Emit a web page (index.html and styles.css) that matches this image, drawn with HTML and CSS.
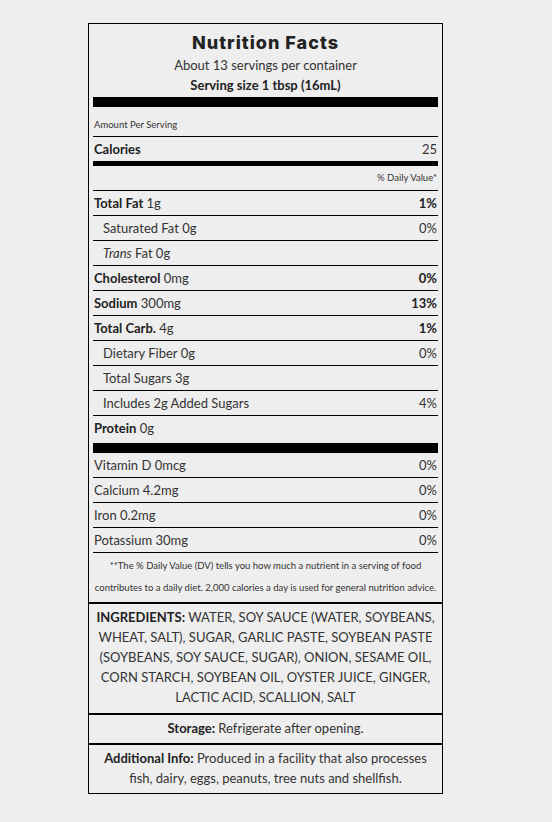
FILE: index.html
```html
<!DOCTYPE html>
<html>
<head>
<meta charset="utf-8">
<link rel="stylesheet" href="styles.css">
</head>
<body>
<div class="panel">
  <div class="label">
    <h1 class="title">Nutrition Facts</h1>
    <p class="servings">About 13 servings per container</p>
    <p class="size">Serving size 1 tbsp (16mL)</p>
    <div class="bar-thick"></div>
    <div class="amount">Amount Per Serving</div>
    <div class="row calories"><span class="b">Calories</span><span>25</span></div>
    <div class="bar-mid"></div>
    <div class="dv">% Daily Value*</div>
    <div class="row"><span><b>Total Fat</b> 1g</span><b>1%</b></div>
    <div class="row sub"><span>Saturated Fat 0g</span><span class="pct">0%</span></div>
    <div class="row sub"><span><i>Trans</i> Fat 0g</span><span></span></div>
    <div class="row"><span><b>Cholesterol</b> 0mg</span><b>0%</b></div>
    <div class="row"><span><b>Sodium</b> 300mg</span><b>13%</b></div>
    <div class="row"><span><b>Total Carb.</b> 4g</span><b>1%</b></div>
    <div class="row sub"><span>Dietary Fiber 0g</span><span class="pct">0%</span></div>
    <div class="row sub"><span>Total Sugars 3g</span><span></span></div>
    <div class="row sub"><span>Includes 2g Added Sugars</span><span class="pct">4%</span></div>
    <div class="row last"><span><b>Protein</b> 0g</span><span></span></div>
    <div class="bar-thick bar-low"></div>
    <div class="row vit"><span>Vitamin D 0mcg</span><span>0%</span></div>
    <div class="row vit"><span>Calcium 4.2mg</span><span>0%</span></div>
    <div class="row vit"><span>Iron 0.2mg</span><span>0%</span></div>
    <div class="row vit"><span>Potassium 30mg</span><span>0%</span></div>
    <p class="foot">**The % Daily Value (DV) tells you how much a nutrient in a serving of food contributes to a daily diet. 2,000 calories a day is used for general nutrition advice.</p>
  </div>
  <div class="section ingredients"><b>INGREDIENTS:</b> WATER, SOY SAUCE (WATER, SOYBEANS, WHEAT, SALT), SUGAR, GARLIC PASTE, SOYBEAN PASTE (SOYBEANS, SOY SAUCE, SUGAR), ONION, SESAME OIL, CORN STARCH, SOYBEAN OIL, OYSTER JUICE, GINGER, LACTIC ACID, SCALLION, SALT</div>
  <div class="section storage"><b>Storage:</b> Refrigerate after opening.</div>
  <div class="section info"><b>Additional Info:</b> Produced in a facility that also processes fish, dairy, eggs, peanuts, tree nuts and shellfish.</div>
</div>
</body>
</html>
```
FILE: styles.css
```css
html, body {
  margin: 0;
  padding: 0;
  background: #eeeeee;
}
body {
  font-family: Lato, "Liberation Sans", sans-serif;
  color: #333;
  font-size: 13px;
}
.panel {
  box-sizing: border-box;
  width: 355px;
  margin: 23px 0 0 88px;
  border: 1px solid #000;
  background: #eeeeee;
}
.label {
  padding: 4px 4px 0;
}
.title {
  margin: 3px 0 0;
  font-family: Inter, "DejaVu Sans", sans-serif;
  font-weight: 800;
  font-size: 18px;
  line-height: 24px;
  letter-spacing: 1px;
  text-align: center;
  color: #222;
}
.servings {
  margin: 0;
  text-align: center;
  line-height: 20px;
  font-size: 13px;
}
.size {
  margin: 0;
  text-align: center;
  line-height: 20px;
  font-size: 13px;
  font-weight: 700;
  color: #222;
}
.bar-thick {
  height: 10px;
  background: #000;
  margin-top: 2px;
}
.bar-low {
  margin-top: 3px;
}
.amount {
  font-size: 9.5px;
  padding: 7px 1px 0;
  line-height: 22px;
  border-bottom: 1px solid #000;
}
.row {
  display: flex;
  justify-content: space-between;
  align-items: center;
  height: 24px;
  border-bottom: 1px solid #000;
  padding: 0 1px;
  font-size: 13px;
}
.row b, .row .b {
  font-weight: 700;
  color: #222;
}
.calories {
  border-bottom: none;
  font-size: 13px;
}
.bar-mid {
  height: 5px;
  background: #000;
}
.dv {
  text-align: right;
  font-size: 9.5px;
  line-height: 24px;
  border-bottom: 1px solid #000;
  padding: 0 1px;
}
.sub {
  padding-left: 10px;
}
.last {
  border-bottom: none;
}
.vit {
  font-size: 13px;
}
.foot {
  margin: 0;
  padding: 2px 0 3px;
  font-size: 9.5px;
  line-height: 22px;
  text-align: center;
}
.section {
  border-top: 2px solid #000;
  text-align: center;
  font-size: 13px;
  line-height: 20px;
}
.section b {
  font-weight: 700;
  color: #222;
}
.ingredients {
  padding: 3px 6px 6px;
}
.storage {
  padding: 3px 8px 5px;
}
.info {
  padding: 3px 8px 5px;
}
```
